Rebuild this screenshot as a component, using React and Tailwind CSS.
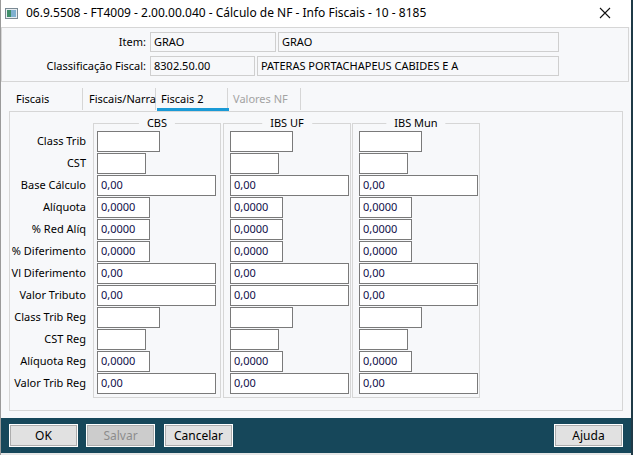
import { useState } from "react";

const rows = [
  { label: "Class Trib", w: "w-[63px]", value: "" },
  { label: "CST", w: "w-[49px]", value: "" },
  { label: "Base Cálculo", w: "w-[119px]", value: "0,00" },
  { label: "Alíquota", w: "w-[53px]", value: "0,0000" },
  { label: "% Red Alíq", w: "w-[53px]", value: "0,0000" },
  { label: "% Diferimento", w: "w-[53px]", value: "0,0000" },
  { label: "Vl Diferimento", w: "w-[119px]", value: "0,00" },
  { label: "Valor Tributo", w: "w-[119px]", value: "0,00" },
  { label: "Class Trib Reg", w: "w-[63px]", value: "" },
  { label: "CST Reg", w: "w-[49px]", value: "" },
  { label: "Alíquota Reg", w: "w-[53px]", value: "0,0000" },
  { label: "Valor Trib Reg", w: "w-[119px]", value: "0,00" },
];

const groups = [
  { title: "CBS", pad: "pl-[3px]" },
  { title: "IBS UF", pad: "pl-[6px]" },
  { title: "IBS Mun", pad: "pl-[6px]" },
];

const tabs = [
  { label: "Fiscais", w: "w-[82px]", pl: "pl-[15px]" },
  { label: "Fiscais/Narra", w: "w-[73px]", pl: "pl-[6px]" },
  { label: "Fiscais 2", w: "w-[72px]", pl: "pl-[5px]" },
  { label: "Valores NF", w: "w-[73px]", pl: "pl-[5px]", disabled: true },
];

const GroupBox = ({ title, pad }) => (
  <div className={`relative h-[275px] w-[128px] border border-[#d6d6d6] pt-[7px] ${pad}`}>
    <span className="absolute left-1/2 top-[-8px] -translate-x-1/2 whitespace-nowrap bg-[#f7f8fa] px-[8px] text-[11px] leading-[14px] text-black">
      {title}
    </span>
    <div className="flex flex-col gap-[1px]">
      {rows.map((row) => (
        <div
          key={row.label}
          className={`flex h-[21px] items-center border border-[#7a7a7a] bg-white pl-[3px] text-[11px] text-[#10104a] ${row.w}`}
        >
          {row.value}
        </div>
      ))}
    </div>
  </div>
);

const Button = ({ children, disabled, className = "" }) => (
  <button
    type="button"
    className={`h-[23px] w-[69px] border border-white text-[12px] outline outline-1 outline-[#adadad] -outline-offset-2 ${
      disabled ? "bg-[#cccccc] text-[#8c8c8c]" : "bg-[#e1e1e1] text-black"
    } ${className}`}
  >
    {children}
  </button>
);

export default function App() {
  const [active] = useState("Fiscais 2");

  return (
    <div
      className="flex h-[455px] w-[633px] bg-[#1f3a47]"
      style={{ fontFamily: '"Noto Sans", "Open Sans", Arial, sans-serif' }}
    >
      <div className="flex h-[455px] w-[631px] flex-col border-l border-[#9a9a9a] bg-[#f7f8fa]">
        {/* title bar */}
        <div className="flex h-[27px] items-center bg-white">
          <svg width="13" height="11" viewBox="0 0 13 11" className="ml-[4px]">
            <rect x="0.5" y="0.5" width="12" height="10" fill="#e8eef2" stroke="#7a8a94" />
            <rect x="2" y="2" width="4" height="7" fill="#3f8f6a" />
            <rect x="6" y="2" width="5" height="7" fill="#7fb0d0" />
          </svg>
          <span className="ml-[8px] whitespace-nowrap text-[12px] text-black">
            06.9.5508 - FT4009 - 2.00.00.040 - Cálculo de NF - Info Fiscais - 10 - 8185
          </span>
          <svg width="12" height="12" viewBox="0 0 12 12" className="ml-auto mr-[20px]">
            <path d="M1 1 L11 11 M11 1 L1 11" stroke="#111" strokeWidth="1.1" />
          </svg>
        </div>

        {/* header panel */}
        <div className="mr-[2px] flex h-[55px] flex-col gap-[4px] border border-[#d6d6d6] pt-[4px]">
          <div className="flex h-[20px] items-center">
            <span className="w-[144px] whitespace-nowrap text-right text-[11px] text-black">Item:</span>
            <div className="ml-[4px] flex h-[20px] w-[126px] items-center border border-[#cfcfcf] bg-[#f7f8fa] pl-[3px] text-[11px]">
              GRAO
            </div>
            <div className="ml-[2px] flex h-[20px] w-[281px] items-center border border-[#cfcfcf] bg-[#f7f8fa] pl-[3px] text-[11px]">
              GRAO
            </div>
          </div>
          <div className="flex h-[20px] items-center">
            <span className="w-[144px] whitespace-nowrap text-right text-[11px] text-black">
              Classificação Fiscal:
            </span>
            <div className="ml-[4px] flex h-[20px] w-[105px] items-center border border-[#cfcfcf] bg-[#f7f8fa] pl-[3px] text-[11px]">
              8302.50.00
            </div>
            <div className="ml-[2px] flex h-[20px] w-[302px] items-center border border-[#cfcfcf] bg-[#f7f8fa] pl-[3px] text-[11px]">
              PATERAS PORTACHAPEUS CABIDES E A
            </div>
          </div>
        </div>

        {/* tabs */}
        <div className="mt-[6px] flex h-[22px] items-stretch">
          {tabs.map((tab) => (
            <div
              key={tab.label}
              className={`relative flex items-center whitespace-nowrap border-r border-[#d6d6d6] text-[11px] ${tab.w} ${tab.pl} ${
                tab.disabled ? "text-[#a3a3a3]" : "text-black"
              }`}
            >
              {tab.label}
              {tab.label === active ? (
                <span className="absolute bottom-[-1px] left-[1px] h-[3px] w-[72px] bg-[#1a9ad6]" />
              ) : null}
            </div>
          ))}
        </div>

        {/* tab panel */}
        <div className="mx-[8px] mt-[1px] flex h-[301px] border border-[#d6d6d6] pt-[11px]">
          <div className="flex w-[78px] flex-col pr-[2px] pt-[7px]">
            {rows.map((row) => (
              <div
                key={row.label}
                className="flex h-[22px] items-center justify-end whitespace-nowrap text-[11px] text-black"
              >
                {row.label}
              </div>
            ))}
          </div>
          <div className="ml-[5px] flex">
            <GroupBox {...groups[0]} />
            <div className="ml-[2px]">
              <GroupBox {...groups[1]} />
            </div>
            <div className="ml-[1px]">
              <GroupBox {...groups[2]} />
            </div>
          </div>
        </div>

        {/* footer */}
        <div className="mt-[7px] flex h-[35px] items-center gap-[8px] bg-[#16475a] px-[8px]">
          <Button>OK</Button>
          <Button disabled>Salvar</Button>
          <Button className="ml-[1px]">Cancelar</Button>
          <Button className="ml-auto">Ajuda</Button>
        </div>
        <div className="h-[2px] bg-[#e6e6e6]" />
      </div>
    </div>
  );
}
